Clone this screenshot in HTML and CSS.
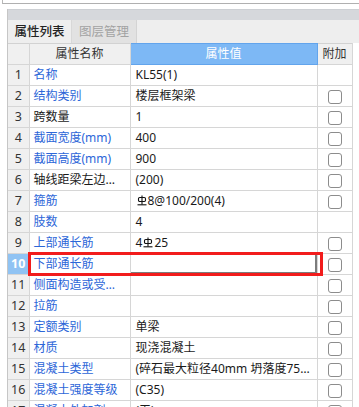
FILE: index.html
```html
<!DOCTYPE html>
<html lang="zh-CN">
<head>
    <meta charset="UTF-8">
    <meta name="viewport" content="width=device-width, initial-scale=1.0">
    <title>属性列表</title>
    <link rel="stylesheet" href="styles.css">
</head>
<body>
    <div class="top-box"></div>

    <div class="panel">
        <div class="panel-title"></div>
        <div class="tabs">
            <div class="tab active">属性列表</div>
            <div class="tab">图层管理</div>
        </div>

        <div class="grid-wrap">
            <table class="prop-table">
                <colgroup>
                    <col class="c-num">
                    <col class="c-name">
                    <col class="c-value">
                    <col class="c-extra">
                </colgroup>
                <thead>
                    <tr>
                        <th class="num"></th>
                        <th>属性名称</th>
                        <th class="sel">属性值</th>
                        <th>附加</th>
                    </tr>
                </thead>
                <tbody>
                    <tr>
                        <td class="num">1</td>
                        <td class="name link">名称</td>
                        <td class="value">KL55(1)</td>
                        <td class="extra"></td>
                    </tr>
                    <tr>
                        <td class="num">2</td>
                        <td class="name link">结构类别</td>
                        <td class="value">楼层框架梁</td>
                        <td class="extra"><span class="check"></span></td>
                    </tr>
                    <tr>
                        <td class="num">3</td>
                        <td class="name">跨数量</td>
                        <td class="value">1</td>
                        <td class="extra"><span class="check"></span></td>
                    </tr>
                    <tr>
                        <td class="num">4</td>
                        <td class="name link">截面宽度(mm)</td>
                        <td class="value">400</td>
                        <td class="extra"><span class="check"></span></td>
                    </tr>
                    <tr>
                        <td class="num">5</td>
                        <td class="name link">截面高度(mm)</td>
                        <td class="value">900</td>
                        <td class="extra"><span class="check"></span></td>
                    </tr>
                    <tr>
                        <td class="num">6</td>
                        <td class="name">轴线距梁左边线距离(mm)</td>
                        <td class="value">(200)</td>
                        <td class="extra"><span class="check"></span></td>
                    </tr>
                    <tr>
                        <td class="num">7</td>
                        <td class="name link">箍筋</td>
                        <td class="value"><svg class="bar-sym" width="10" height="11" viewBox="0 0 10 11" fill="none" stroke="#111" stroke-width="1.1"><path d="M5 0.5V9.5"/><rect x="1.5" y="2.5" width="7" height="4" rx="1.2"/><path d="M0.5 9.8H9.5"/></svg>8@100/200(4)</td>
                        <td class="extra"><span class="check"></span></td>
                    </tr>
                    <tr>
                        <td class="num">8</td>
                        <td class="name link">肢数</td>
                        <td class="value">4</td>
                        <td class="extra"></td>
                    </tr>
                    <tr>
                        <td class="num">9</td>
                        <td class="name link">上部通长筋</td>
                        <td class="value">4<svg class="bar-sym" width="10" height="11" viewBox="0 0 10 11" fill="none" stroke="#111" stroke-width="1.1"><path d="M5 0.5V9.5"/><rect x="1.5" y="2.5" width="7" height="4" rx="1.2"/><path d="M0.5 9.8H9.5"/></svg>25</td>
                        <td class="extra"><span class="check"></span></td>
                    </tr>
                    <tr class="current">
                        <td class="num">10</td>
                        <td class="name link">下部通长筋</td>
                        <td class="value editing"><div class="editor"></div></td>
                        <td class="extra"><span class="check"></span></td>
                    </tr>
                    <tr>
                        <td class="num">11</td>
                        <td class="name link">侧面构造或受扭筋(总配筋值)</td>
                        <td class="value"></td>
                        <td class="extra"><span class="check"></span></td>
                    </tr>
                    <tr>
                        <td class="num">12</td>
                        <td class="name link">拉筋</td>
                        <td class="value"></td>
                        <td class="extra"><span class="check"></span></td>
                    </tr>
                    <tr>
                        <td class="num">13</td>
                        <td class="name link">定额类别</td>
                        <td class="value">单梁</td>
                        <td class="extra"><span class="check"></span></td>
                    </tr>
                    <tr>
                        <td class="num">14</td>
                        <td class="name link">材质</td>
                        <td class="value">现浇混凝土</td>
                        <td class="extra"><span class="check"></span></td>
                    </tr>
                    <tr>
                        <td class="num">15</td>
                        <td class="name link">混凝土类型</td>
                        <td class="value">(碎石最大粒径40mm 坍落度75~90 塑性混凝土)</td>
                        <td class="extra"><span class="check"></span></td>
                    </tr>
                    <tr>
                        <td class="num">16</td>
                        <td class="name link">混凝土强度等级</td>
                        <td class="value">(C35)</td>
                        <td class="extra"><span class="check"></span></td>
                    </tr>
                    <tr>
                        <td class="num">17</td>
                        <td class="name link">混凝土外加剂</td>
                        <td class="value">(无)</td>
                        <td class="extra"><span class="check"></span></td>
                    </tr>
                </tbody>
            </table>

            <!-- annotation box around row 10 -->
            <div class="mark"></div>
        </div>
    </div>
</body>
</html>
```

FILE: styles.css
```css
:root {
    --grid-line: #d6d6d6;
    --head-bg: #f0f0f0;
    --link-color: #2c66d8;
    --text-color: #1a1a1a;
    --sel-blue: #7db8f5;
}

* {
    margin: 0;
    padding: 0;
    box-sizing: border-box;
}

body {
    font-family: "Noto Sans", "Noto Sans CJK SC", sans-serif;
    font-size: 12px;
    color: var(--text-color);
    background-color: white;
    overflow: hidden;
}

.top-box {
    height: 4px;
    margin-left: 2px;
    border-left: 1px solid #b8b8b8;
    border-bottom: 1px solid #b0b0b0;
}

.panel {
    margin-top: 5px;
    margin-left: 7px;
    border-left: 1px solid #c6c6c6;
}

.panel-title {
    height: 11px;
    background-color: #d6d8dc;
    border-top: 1px solid #cdd0d4;
}

.tabs {
    display: flex;
    height: 23px;
    background-color: #eeeeee;
}

.tab {
    width: 65px;
    line-height: 23px;
    text-align: center;
    font-size: 12.5px;
    color: #a2a2a2;
    background-color: #e2e2e2;
    border-right: 1px solid #d4d4d4;
}

.tab.active {
    width: 64px;
    color: #222;
    font-weight: 500;
    background-color: #eeeeee;
    border-right: 1px solid #d8d8d8;
}

.grid-wrap {
    position: relative;
}

.prop-table {
    width: 344px;
    table-layout: fixed;
    border-collapse: collapse;
}

.c-num { width: 21px; }
.c-name { width: 101px; }
.c-value { width: 187px; }
.c-extra { width: 35px; }

.prop-table th,
.prop-table td {
    height: 21px;
    padding: 0 4px;
    border-right: 1px solid var(--grid-line);
    border-bottom: 1px solid var(--grid-line);
    white-space: nowrap;
    overflow: hidden;
    text-overflow: ellipsis;
    line-height: 20px;
    text-align: left;
}

.prop-table thead th {
    background-color: var(--head-bg);
    font-weight: normal;
    text-align: center;
    color: #333;
    border-top: 1px solid #d2d2d2;
}

.prop-table thead th.sel {
    background-color: var(--sel-blue);
    color: white;
    border: 1px solid #62a4ec;
}

.prop-table td.num {
    padding: 0;
    text-align: center;
    font-size: 12.5px;
    color: #333;
    background-color: var(--head-bg);
}

.prop-table td.name.link {
    color: var(--link-color);
}

.prop-table td.value {
    padding-left: 5px;
}

.prop-table td.extra {
    padding: 0;
    text-align: center;
}

.bar-sym {
    display: inline-block;
    vertical-align: -1px;
    margin: 0 1px 0 1px;
}

.check {
    display: inline-block;
    width: 14px;
    height: 14px;
    border: 1px solid #8c8c8c;
    border-radius: 3px;
    vertical-align: middle;
    background-color: white;
}

.current td.num {
    background-color: #90c3f3;
    color: white;
    font-weight: bold;
}

.prop-table td.editing {
    padding: 0;
}

.editor {
    height: 20px;
    margin-right: 0;
    border-right: 2px solid #7c7c7c;
    border-bottom: 2px solid #7c7c7c;
}

.mark {
    position: absolute;
    left: 20px;
    top: 209px;
    width: 295px;
    height: 24px;
    border: 3px solid #f21c1c;
    pointer-events: none;
}
```
